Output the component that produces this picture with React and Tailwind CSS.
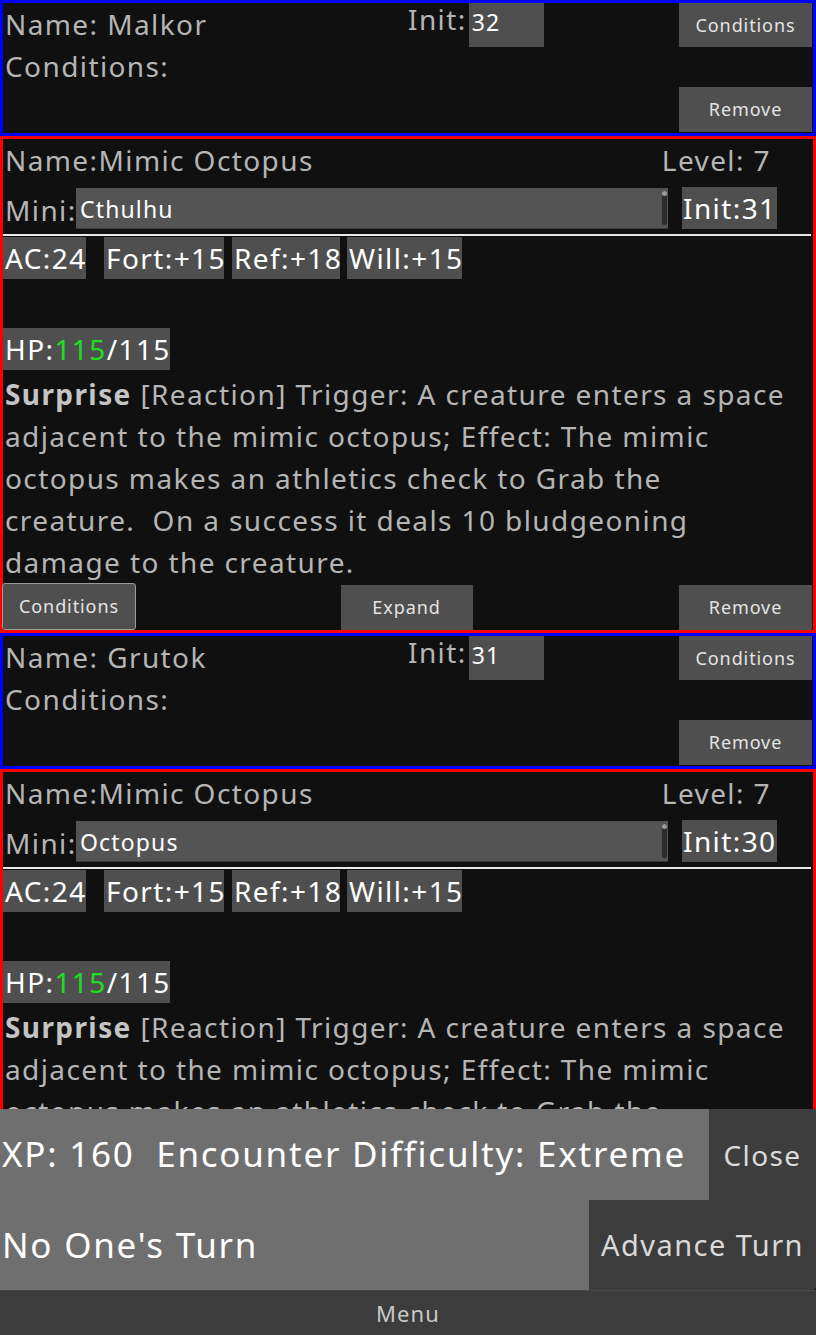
const font = { fontFamily: '"Noto Sans", "Open Sans", sans-serif' };

function Btn({ children, className = '' }) {
    return (
        <div className={`flex items-center justify-center bg-[#4f4f4f] text-[#e4e4e4] text-[18px] tracking-[0.05em] ${className}`}>
            {children}
        </div>
    );
}

// player row: blue frame, name + init + two buttons
function PlayerCard({ name, init }) {
    return (
        <div className="h-[136px] border-[3px] border-[#0000ff] flex">
            <div className="w-[405px] pl-[2px] text-[28px] tracking-[0.05em] leading-[42px] text-[#b5b5b5]">
                <div>Name: {name}</div>
                <div>Conditions:</div>
            </div>
            <div className="flex items-start">
                <span className="text-[28px] tracking-[0.05em] leading-[24px] text-[#b5b5b5] pt-[4px] mr-[2px]">Init:</span>
                <div className="w-[75px] h-[44px] bg-[#4f4f4f] text-white text-[23px] tracking-[0.05em] pl-[3px] pt-[2px]">{init}</div>
            </div>
            <div className="ml-auto mr-[1px] w-[133px] flex flex-col justify-between pb-[1px]">
                <Btn className="h-[44px]">Conditions</Btn>
                <Btn className="h-[45px]">Remove</Btn>
            </div>
        </div>
    );
}

function Stat({ children, className = '' }) {
    return <div className={`bg-[#4f4f4f] text-white pl-[2px] h-[42px] leading-[42px] whitespace-nowrap ${className}`}>{children}</div>;
}

// monster row: red frame, stat block, description
function MonsterCard({ mini, init }) {
    return (
        <div className="h-[497px] border-[3px] border-[#ff0000] flex flex-col text-[28px] tracking-[0.05em]">
            <div className="flex justify-between h-[48px] leading-[42px] text-[#b5b5b5] pl-[2px] pr-[42px]">
                <span>Name:Mimic Octopus</span>
                <span>Level: 7</span>
            </div>
            <div className="flex items-center h-[42px] pl-[2px]">
                <span className="w-[71px] text-[#b5b5b5] leading-[42px] pt-[4px] whitespace-nowrap">Mini:</span>
                <div className="relative w-[592px] h-[41px] bg-[#545454] border-b border-[#3a3a3a] text-white text-[23px] tracking-[0.05em] leading-[41px] pl-[4px] pt-[1px]">
                    {mini}
                    <div className="absolute right-[1px] top-[3px] w-[5px] h-[34px] rounded-[2px] bg-[#2b2b2b]">
                        <div className="w-[5px] h-[5px] rounded-full bg-[#9a9a9a]" />
                    </div>
                </div>
                <div className="ml-[14px] w-[95px] h-[42px] bg-[#4f4f4f] text-white leading-[42px] pl-[1px] whitespace-nowrap">Init:{init}</div>
            </div>
            <div className="h-[2px] bg-[#e8e8e8] mt-[5px] mr-[2px]" />
            <div className="flex mt-[1px]">
                <Stat className="w-[83px] mr-[18px]">AC:24</Stat>
                <Stat className="w-[120px] mr-[8px]">Fort:+15</Stat>
                <Stat className="w-[108px] mr-[7px]">Ref:+18</Stat>
                <Stat className="w-[115px]">Will:+15</Stat>
            </div>
            <div className="flex mt-[49px]">
                <Stat className="w-[167px]">HP:<span className="text-[#1fe01f]">115</span>/115</Stat>
            </div>
            <p className="pl-[2px] pt-[3px] leading-[42px] text-[#b5b5b5] whitespace-pre">
                <b className="text-[#c4c4c4]">Surprise</b> [Reaction] Trigger: A creature enters a space{'\n'}
                adjacent to the mimic octopus; Effect: The mimic{'\n'}
                octopus makes an athletics check to Grab the{'\n'}
                creature.  On a success it deals 10 bludgeoning{'\n'}
                damage to the creature.
            </p>
            <div className="mt-auto flex justify-between items-end pr-[1px]">
                <div className="w-[134px] h-[47px] -ml-[1px] flex items-center justify-center bg-[#4f4f4f] border border-[#9a9a9a] rounded-[3px] text-[#e4e4e4] text-[18px] tracking-[0.05em]">
                    Conditions
                </div>
                <Btn className="w-[132px] h-[45px] mr-[2px]">Expand</Btn>
                <Btn className="w-[133px] h-[45px]">Remove</Btn>
            </div>
        </div>
    );
}

export default function App() {
    return (
        <div style={font} className="relative w-[816px] h-[1335px] overflow-hidden bg-[#101010]">
            <PlayerCard name="Malkor" init="32" />
            <MonsterCard mini="Cthulhu" init="31" />
            <PlayerCard name="Grutok" init="31" />
            <MonsterCard mini="Octopus" init="30" />

            {/* encounter footer over the list */}
            <div className="absolute left-0 right-0 bottom-0 flex flex-col">
                <div className="flex h-[91px]">
                    <div className="w-[709px] bg-[#6f6f6f] flex items-center pl-[2px] text-[35px] tracking-[0.05em] text-white whitespace-pre">
                        XP: 160  Encounter Difficulty: Extreme
                    </div>
                    <div className="flex-1 bg-[#3d3d3d] flex items-center justify-center text-[28px] tracking-[0.05em] text-[#dadada]">Close</div>
                </div>
                <div className="flex h-[90px]">
                    <div className="w-[589px] bg-[#6f6f6f] flex items-center pl-[2px] text-[35px] tracking-[0.05em] text-white">
                        No One's Turn
                    </div>
                    <div className="flex-1 bg-[#3c3c3c] rounded-br-[3px] flex items-center justify-center text-[29px] tracking-[0.05em] text-[#dadada]">Advance Turn</div>
                </div>
                <div className="h-[45px] bg-[#3c3c3c] border-t border-[#484848] flex items-center justify-center text-[22px] tracking-[0.05em] text-[#c8c8c8]">
                    Menu
                </div>
            </div>
        </div>
    );
}
